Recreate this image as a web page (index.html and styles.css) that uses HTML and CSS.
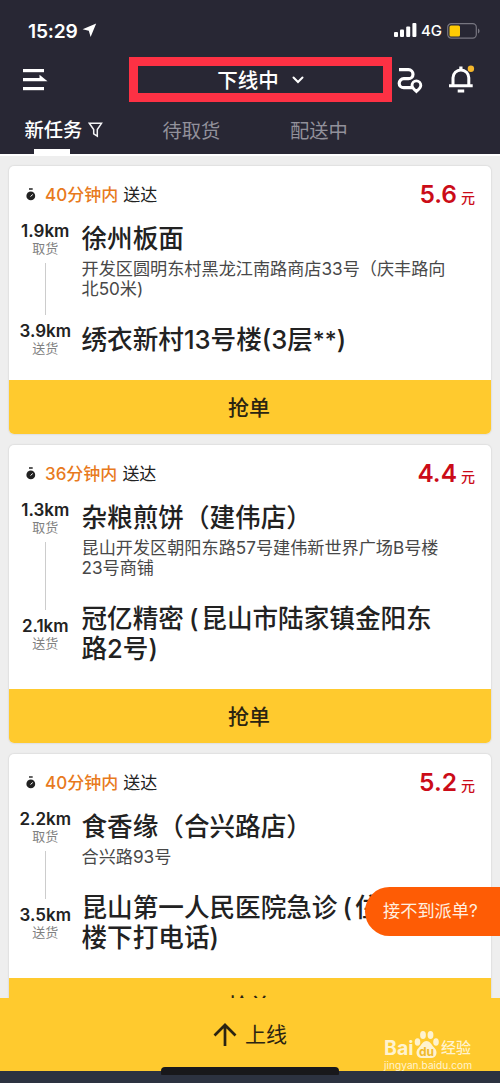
FILE: index.html
```html
<!DOCTYPE html>
<html lang="zh-CN">
<head>
<meta charset="utf-8">
<title>新任务</title>
<link rel="stylesheet" href="styles.css">
</head>
<body>
<div class="app">
  <header class="top">
    <div class="status">
      <span class="clock">15:29</span>
      <svg class="locate" width="15" height="15" viewBox="0 0 15 15"><path d="M14.2.5.6 6.2l6.2 1.5 1.8 6.3z" fill="#fff"/></svg>
      <svg class="signal" width="23" height="15" viewBox="0 0 23 15" fill="#fff"><rect y="9" width="4" height="5" rx="1"/><rect x="6" y="6.5" width="4" height="7.5" rx="1"/><rect x="12.2" y="3.5" width="4" height="10.5" rx="1"/><rect x="18.4" y="0" width="4" height="14" rx="1"/></svg>
      <span class="net">4G</span>
      <svg class="battery" width="33" height="16" viewBox="0 0 33 16"><rect x="0.7" y="0.7" width="28.6" height="14.4" rx="3.6" fill="none" stroke="#777680" stroke-width="1.2"/><path d="M4 2.500h7.500q1.500 0 1.500 1.500v8q0 1.500-1.500 1.500H4q-1.500 0-1.500-1.500V4q0-1.500 1.500-1.500z" fill="#fecb04"/><path d="M31 5.500v5c2-.8 2-4.200 0-5z" fill="#777680"/></svg>
    </div>
    <nav class="nav">
      <svg class="menu" width="25" height="22" viewBox="0 0 25 22" fill="#fff"><rect width="21" height="3.200"/><path d="M0 9h16.500V5.800L24.500 12.200H0z"/><rect y="18" width="21" height="3.200"/></svg>
      <button class="state"><span>下线中</span><svg width="12" height="8" viewBox="0 0 12 8"><path d="m1.500 1.500 4.500 4.500 4.500-4.500" fill="none" stroke="#fff" stroke-width="2" stroke-linecap="round"/></svg></button>
      <svg class="route" width="26" height="28" viewBox="0 0 26 28" fill="none" stroke="#fff"><path d="M2 3.700h9.500a4.500 4.500 0 0 1 0 9H6.700a4.500 4.500 0 0 0 0 9H15" stroke-width="3.200"/><path d="M19.400 25.500c-2.600-2.200-4.400-3.700-4.400-6.200a4.400 4.400 0 0 1 8.800 0c0 2.500-1.800 4-4.400 6.200z" stroke-width="2.900"/></svg>
      <svg class="bell" width="28" height="29" viewBox="0 0 28 29"><path d="M5 20.500v-7.700a7.900 7.900 0 0 1 15.800 0v7.700M1 20.700h23.700" fill="none" stroke="#fff" stroke-width="3"/><path d="M11.300 1.500h3.200v4h-3.200zM9.700 24.500h6.500v3H9.700z" fill="#fff"/><circle cx="22.900" cy="3.800" r="3.200" fill="#f5b72c"/></svg>
    </nav>
    <div class="tabs">
      <div class="tab tab-on"><span>新任务</span><svg width="15" height="16" viewBox="0 0 15 16"><path d="M1.300 1.300h12.200L9.300 7.500v6.700L5.700 11.800V7.500z" fill="none" stroke="#f4f4f6" stroke-width="1.500"/></svg></div>
      <div class="tab">待取货</div>
      <div class="tab">配送中</div>
    </div>
  </header>

  <main class="list">
    <article class="card">
      <div class="card-head">
        <svg class="timer" width="10" height="13" viewBox="0 0 10 13"><circle cx="4.800" cy="7.900" r="4.400" fill="#222"/><path d="M3 1h3.700" stroke="#222" stroke-width="1.400"/><path d="m4.500 8.500 2.300-2" stroke="#fff" stroke-width="1"/></svg>
        <span class="limit">40分钟内</span><span class="arrive">送达</span>
        <span class="price">5.6</span><span class="yuan">元</span>
      </div>
      <div class="trip">
        <div class="legs"><b>1.9km</b><small>取货</small><i></i><b>3.9km</b><small>送货</small></div>
        <div class="places">
          <h2>徐州板面</h2>
          <p>开发区圆明东村黑龙江南路商店33号（庆丰路向<br>北50米)</p>
          <h2>绣衣新村13号楼(3层<span class="stars">**</span>)</h2>
        </div>
      </div>
      <button class="grab">抢单</button>
    </article>

    <article class="card">
      <div class="card-head">
        <svg class="timer" width="10" height="13" viewBox="0 0 10 13"><circle cx="4.800" cy="7.900" r="4.400" fill="#222"/><path d="M3 1h3.700" stroke="#222" stroke-width="1.400"/><path d="m4.500 8.500 2.300-2" stroke="#fff" stroke-width="1"/></svg>
        <span class="limit">36分钟内</span><span class="arrive">送达</span>
        <span class="price">4.4</span><span class="yuan">元</span>
      </div>
      <div class="trip">
        <div class="legs legs-tall"><b>1.3km</b><small>取货</small><i></i><b>2.1km</b><small>送货</small></div>
        <div class="places">
          <h2>杂粮煎饼（建伟店）</h2>
          <p>昆山开发区朝阳东路57号建伟新世界广场B号楼<br>23号商铺</p>
          <h2>冠亿精密<span class="paren">(</span>昆山市陆家镇金阳东<br>路2号)</h2>
        </div>
      </div>
      <button class="grab">抢单</button>
    </article>

    <article class="card">
      <div class="card-head">
        <svg class="timer" width="10" height="13" viewBox="0 0 10 13"><circle cx="4.800" cy="7.900" r="4.400" fill="#222"/><path d="M3 1h3.700" stroke="#222" stroke-width="1.400"/><path d="m4.500 8.500 2.300-2" stroke="#fff" stroke-width="1"/></svg>
        <span class="limit">40分钟内</span><span class="arrive">送达</span>
        <span class="price">5.2</span><span class="yuan">元</span>
      </div>
      <div class="trip">
        <div class="legs legs-tall"><b>2.2km</b><small>取货</small><i></i><b>3.5km</b><small>送货</small></div>
        <div class="places">
          <h2>食香缘（合兴路店）</h2>
          <p>合兴路93号</p>
          <h2>昆山第一人民医院急诊<span class="paren">(</span>住<br>楼下打电话)</h2>
        </div>
      </div>
      <button class="grab">抢单</button>
    </article>
  </main>

  <footer class="online">
    <svg width="24" height="24" viewBox="0 0 24 24"><path d="M12 23V2M1.500 12.500 12 2l10.500 10.500" fill="none" stroke="#2b2412" stroke-width="2.700"/></svg>
    <span>上线</span>
  </footer>

  <div class="help">接不到派单?</div>
  <div class="home"></div>
  <div class="mark">
    <div class="mark-row">
      <span class="bai">Bai</span>
      <svg width="25" height="29" viewBox="0 0 25 29" fill="#fff3cf"><ellipse cx="3.500" cy="12" rx="2.800" ry="3.800"/><ellipse cx="9" cy="5" rx="2.900" ry="4"/><ellipse cx="16.500" cy="5" rx="2.900" ry="4"/><ellipse cx="22" cy="12" rx="2.800" ry="3.800"/><path d="M12.500 11c4 0 5 4 8 7 4 4 1.500 10-3 10H7.500c-4.500 0-7-6-3-10 3-3 4-7 8-7z"/><text x="12.500" y="25.500" text-anchor="middle" class="du">du</text></svg>
      <span class="jy">经验</span>
    </div>
    <div class="url">jingyan.baidu.com</div>
  </div>
</div>
</body>
</html>
```
FILE: styles.css
```css
* { box-sizing: border-box; }
body {
  margin: 0;
  font-family: Inter, "Noto Sans CJK SC", sans-serif;
  color: #222;
  background: #2c3240;
}
button { border: 0; padding: 0; font: inherit; color: inherit; }
svg { display: block; flex: none; }

.app {
  position: relative;
  display: flex;
  flex-direction: column;
  width: 500px;
  height: 1083px;
  padding-bottom: 12px;
  overflow: hidden;
  white-space: nowrap;
}

.top { flex: none; height: 156px; background: #282734; color: #fff; border-bottom: 2px solid #fff; }
.status { display: flex; align-items: center; height: 57px; padding: 4px 20px 0 28px; }
.clock { width: 51px; font-size: 19.200px; font-weight: 600; letter-spacing: -0.2px; }
.locate { margin-left: 3px; }
.signal { margin-left: auto; }
.net { margin: 0 5px 0 4px; font-size: 15px; font-weight: 500; }

.nav { display: flex; align-items: center; height: 45px; padding-left: 23px; }
.state {
  display: flex;
  align-items: center;
  justify-content: center;
  gap: 13px;
  width: 263px;
  height: 45px;
  margin-left: 81px;
  padding-bottom: 2px;
  border: 9.500px solid #fd3144;
  background: #282734;
  font-size: 20.500px;
  font-weight: 500;
}
.state svg { margin-top: 2px; }
.route { margin-left: 5px; }
.bell { margin-left: 25px; }

.tabs { display: flex; height: 52px; padding-left: 24.500px; font-size: 19.300px; line-height: 58px; color: #92919b; }
.tab { width: 127.500px; }
.tab:first-child { width: 138px; }
.tab-on { position: relative; display: flex; align-items: center; gap: 6px; color: #fff; font-weight: 500; }
.tab-on span { padding-top: 4px; }
.tab-on svg { margin-top: 4px; }
.tab-on::after { content: ""; position: absolute; left: 9px; bottom: 0; width: 36px; height: 5px; background: #fff; }

.list { flex: 1; min-height: 0; overflow: hidden; display: flex; flex-direction: column; gap: 11px; padding: 10px 9px 0; background: #eee; }
.card { flex: none; border-radius: 5px; background: #fff; box-shadow: 0 0 1px 1px #e0e0e0; overflow: hidden; }
.card-head { display: flex; align-items: center; height: 57px; padding: 0 16px 2px 17px; font-size: 17px; }
.timer { margin: 2px 9px 0 0; }
.limit { color: #e87a1d; font-weight: 500; }
.arrive { margin-left: 5px; }
.price { margin: 1px 0 0 auto; font-size: 24.500px; font-weight: 600; color: #cb0c18; }
.yuan { margin: 7px 0 0 4px; font-size: 14px; font-weight: 500; color: #cb0c18; }

.trip { display: flex; padding-bottom: 26px; }
.legs { display: flex; flex-direction: column; align-items: center; width: 72.500px; margin-bottom: -4px; }
.legs-tall { margin-bottom: 10px; }
.legs b { font-size: 17px; line-height: 17px; font-weight: 600; }
.legs small { font-size: 13px; line-height: 16px; padding-bottom: 2px; color: #808080; }
.legs i { flex: 1; width: 1px; margin: 5px 0 8px; background: #ccc; }
.places { padding-top: 1px; margin-bottom: -1px; }
.places h2 { margin: 0; font-size: 25.600px; line-height: 30px; font-weight: 500; }
.places p { margin: 5px 0 26px; font-size: 17.150px; line-height: 20px; color: #484848; }
.paren { padding: 0 3px 0 5px; }
.stars { font-size: 23px; line-height: 0; vertical-align: 1px; }
.grab { display: block; width: 100%; height: 54px; padding: 0 2px 3px 0; background: #ffca2e; font-size: 21px; font-weight: 500; color: #2b2412; }

.online { flex: none; display: flex; align-items: center; justify-content: center; gap: 8px; height: 73px; background: #ffca2e; font-size: 21px; color: #2b2412; }
.online span { margin-top: -3px; }
.help {
  position: absolute;
  right: 0;
  top: 887px;
  width: 135px;
  height: 49px;
  padding-left: 18px;
  border-radius: 25px 0 0 25px;
  background: #fe5c05;
  color: #fff0e0;
  font-size: 17.200px;
  line-height: 48px;
}
.home { position: absolute; left: 161px; bottom: 8px; width: 178px; height: 8px; border-radius: 4px 4px 1px 1px; background: #18181b; }
.mark { position: absolute; left: 384px; top: 1030px; color: #fff3cf; }
.mark-row { display: flex; align-items: flex-end; height: 29px; }
.bai { width: 30px; font-size: 19.500px; line-height: 21px; font-weight: 700; }
.jy { margin-left: 2px; font-size: 15px; line-height: 22px; font-weight: 500; }
.du { font-size: 12px; font-weight: 700; fill: #f0ba2b; }
.url { font-size: 10.200px; line-height: 12px; }
```
